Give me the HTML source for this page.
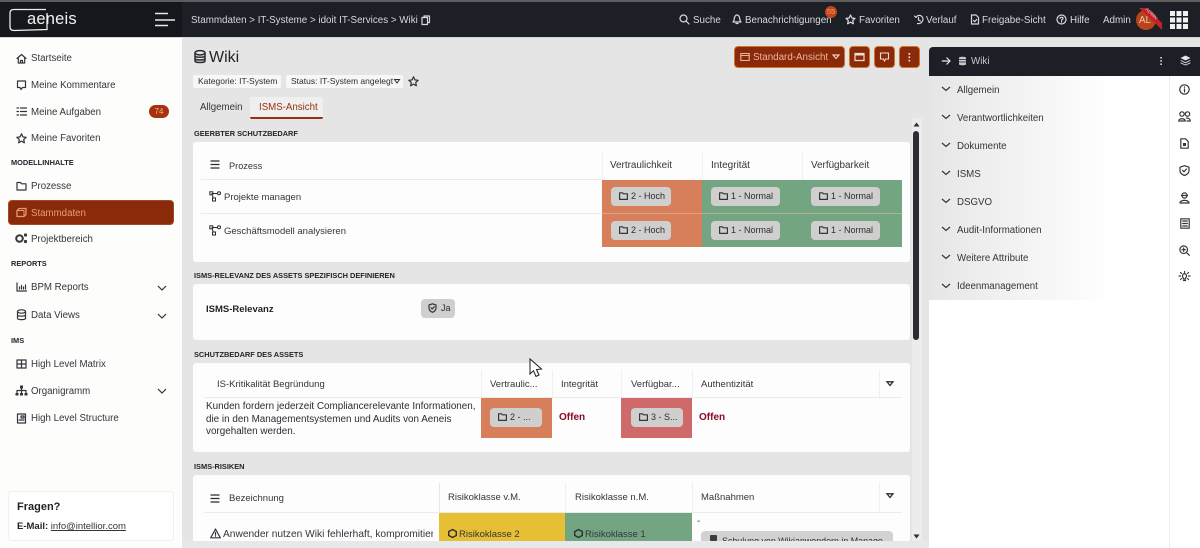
<!DOCTYPE html>
<html lang="de"><head><meta charset="utf-8"><title>Wiki</title>
<style>
*{box-sizing:border-box}
html,body{margin:0;padding:0;width:1200px;height:548px;overflow:hidden;background:#e5e5e5;font-family:"Liberation Sans",sans-serif;color:#2b2d33}
.a{position:absolute}
.t{position:absolute;white-space:nowrap;line-height:14px;font-size:9.7px;margin-top:1px}
.h{color:#d8d9dc;font-size:9.8px}
.s{font-weight:700;font-size:7.4px;color:#22242a}
.n{font-size:9.7px;color:#33353b}
.c{font-size:9.5px;color:#33353b}
.w{background:#fdfdfd}
.line{position:absolute;background:#ebebeb;height:1px}
.sep{position:absolute;width:1px;background:#f0f0f0}
.chip{position:absolute;background:#cfcfce;border-radius:4px;height:19px;color:#2b2d33;font-size:9px;line-height:19px;white-space:nowrap;padding-left:20px}
.chip svg{position:absolute;left:8px;top:5px}
svg{position:absolute;overflow:visible}
.i{fill:none;stroke:#33353b;stroke-width:1.2;stroke-linecap:round;stroke-linejoin:round}
.ih{fill:none;stroke:#d8d9dc;stroke-width:1.2;stroke-linecap:round;stroke-linejoin:round}
.btn{position:absolute;top:46px;height:22px;background:#8a2a0b;border:1px solid #c9772f;border-radius:4px}
.o{font-weight:700;color:#8c0a2a;font-size:10px}
</style></head><body>
<!-- header -->
<div class="a" style="left:0;top:0;width:1200px;height:37px;background:#1c1f26;border-top:2px solid #5b5c5e"></div>
<div class="a" style="left:0;top:0;width:182px;height:37px;background:#15171c;border-top:2px solid #5b5c5e"></div>
<div class="a" style="left:0;top:37px;width:1200px;height:1px;background:#d5d6dc"></div>
<svg style="left:0;top:0" width="182" height="37"><path d="M46 9.500L14 9.500Q10 9.500 10 13L10 27Q10 30.500 14 30.500L47 29.500V13" fill="none" stroke="#eee" stroke-width="1.300"/><path d="M155 13.500H168M155 20H175M155 25.500H168" stroke="#e8e8e8" stroke-width="1.400" fill="none"/></svg>
<div class="t" style="left:27px;top:8px;font-size:16.500px;line-height:20px;color:#f2f2f2;letter-spacing:.2px">aeneis</div>
<div class="t h" style="left:191px;top:13px">Stammdaten &gt; IT-Systeme &gt; idoit IT-Services &gt; Wiki</div>
<svg style="left:421px;top:15px" width="10" height="10"><path class="ih" d="M3 2.500V1H8.500V7.500H7M1 2.500H6.500V9.500H1Z"/></svg>
<svg style="left:679px;top:14px" width="11" height="11"><circle class="ih" cx="4.500" cy="4.500" r="3.500"/><path class="ih" d="M7 7L10 10"/></svg>
<div class="t h" style="left:693px;top:13px">Suche</div>
<svg style="left:732px;top:14px" width="10" height="11"><path class="ih" d="M1 8C2.500 7 2 5 2.500 3.500S4 1 5 1S7 2 7.500 3.500S7.500 7 9 8ZM4 9.500H6"/></svg>
<div class="t h" style="left:745px;top:13px">Benachrichtigungen</div>
<div class="a" style="left:825px;top:6px;width:12px;height:12px;border-radius:50%;background:#c2451a;color:#e9a27f;font-size:7.500px;line-height:12px;text-align:center">55</div>
<svg style="left:845px;top:14px" width="11" height="11"><path class="ih" d="M5.500 1L6.900 4L10 4.400L7.700 6.500L8.400 9.800L5.500 8.100L2.600 9.800L3.300 6.500L1 4.400L4.100 4Z"/></svg>
<div class="t h" style="left:859px;top:13px">Favoriten</div>
<svg style="left:913px;top:14px" width="11" height="11"><path class="ih" d="M1.500 2L3 3.500C4 1.500 6 1 7.500 1.600C9.500 2.500 10.500 4.500 9.700 6.700C9 8.500 7 10 4.500 9.500M5.500 3.500V6L7.500 7"/></svg>
<div class="t h" style="left:926px;top:13px">Verlauf</div>
<svg style="left:970px;top:14px" width="10" height="11"><path class="ih" d="M1.500 1H6L8.500 3.500V10H1.500ZM3.500 6.500L4.700 7.700L6.700 5.500"/></svg>
<div class="t h" style="left:982px;top:13px">Freigabe-Sicht</div>
<svg style="left:1056px;top:14px" width="11" height="11"><circle class="ih" cx="5.500" cy="5.500" r="4.500"/><path class="ih" d="M4 4.300C4.300 3 7 3 7 4.500C7 5.500 5.500 5.500 5.500 6.700M5.500 8V8.200"/></svg>
<div class="t h" style="left:1070px;top:13px">Hilfe</div>
<div class="t h" style="left:1103px;top:13px">Admin</div>
<div class="a" style="left:1136px;top:10px;width:20px;height:20px;border-radius:50%;background:#b9431a"></div>
<div class="t" style="left:1139px;top:13px;font-size:9.800px;color:#e8c8b5">AL</div>
<svg style="left:1136px;top:7px" width="28" height="24"><path d="M3 1H11L26 16L26 23L18 15Z" fill="#c2202a"/></svg>
<div class="t" style="left:1144px;top:9px;font-size:4.500px;color:#f4c9c9;transform:rotate(45deg);line-height:8px">ADMIN</div>
<svg style="left:1170px;top:11px" width="18" height="18"><g fill="#f2f2f2"><rect x="0" y="0" width="5" height="5"/><rect x="6.500" y="0" width="5" height="5"/><rect x="13" y="0" width="5" height="5"/><rect x="0" y="6.500" width="5" height="5"/><rect x="6.500" y="6.500" width="5" height="5"/><rect x="13" y="6.500" width="5" height="5"/><rect x="0" y="13" width="5" height="5"/><rect x="6.500" y="13" width="5" height="5"/><rect x="13" y="13" width="5" height="5"/></g></svg>

<!-- sidebar -->
<div class="a" style="left:0;top:38px;width:182px;height:510px;background:#fdfdfc"></div>
<svg style="left:16px;top:53px" width="11" height="11"><path class="i" d="M1 5.500L5.500 1.500L10 5.500M2.300 4.500V10H8.700V4.500M4.500 10V7.500H6.500V10"/></svg>
<div class="t n" style="left:31px;top:51px">Startseite</div>
<svg style="left:16px;top:80px" width="11" height="11"><path class="i" d="M1.500 1H9.500V7.500H6.500L5 9.500L4 7.500H1.500Z"/></svg>
<div class="t n" style="left:31px;top:78px">Meine Kommentare</div>
<svg style="left:16px;top:106px" width="11" height="11"><path class="i" d="M4.500 2H10.500M4.500 5.500H10.500M4.500 9H10.500M1 2H2.500M1 5.500H2.500M1 9H2.500"/></svg>
<div class="t n" style="left:31px;top:105px">Meine Aufgaben</div>
<div class="a" style="left:149px;top:105px;width:20px;height:13px;border-radius:7px;background:#a8320e;color:#e7b7a0;font-size:8px;line-height:13px;text-align:center">74</div>
<svg style="left:16px;top:133px" width="11" height="11"><path class="i" d="M5.500 .8L6.900 3.900L10.200 4.300L7.700 6.500L8.400 9.800L5.500 8.100L2.600 9.800L3.300 6.500L.8 4.300L4.100 3.900Z"/></svg>
<div class="t n" style="left:31px;top:131px">Meine Favoriten</div>
<div class="t s" style="left:11px;top:155px">MODELLINHALTE</div>
<svg style="left:16px;top:181px" width="11" height="10"><path class="i" d="M1 1.500H4.500L5.500 2.800H10V9H1Z"/></svg>
<div class="t n" style="left:31px;top:179px">Prozesse</div>
<div class="a" style="left:8px;top:200px;width:166px;height:25px;background:#8a2a0b;border-radius:4px;border:1px solid #a24a22"></div>
<svg style="left:16px;top:207px" width="11" height="11"><path d="M1 3.500L3 1.500H10V7.500L8 9.500H1Z" fill="none" stroke="#e59a6c" stroke-width="1.300"/><path d="M1 3.500H8V9.500" fill="none" stroke="#e59a6c" stroke-width="1"/></svg>
<div class="t n" style="left:31px;top:206px;color:#ec9d6d">Stammdaten</div>
<svg style="left:15px;top:233px" width="13" height="11"><circle cx="4.500" cy="5.500" r="3.300" fill="none" stroke="#33353b" stroke-width="2"/><circle cx="10.500" cy="2" r="1.600" fill="#33353b"/><circle cx="10.500" cy="8.500" r="1.600" fill="#33353b"/></svg>
<div class="t n" style="left:31px;top:232px">Projektbereich</div>
<div class="t s" style="left:11px;top:256px">REPORTS</div>
<svg style="left:16px;top:282px" width="11" height="10"><path class="i" d="M1 1V9H10.500M3.500 7V5M5.500 7V3.500M7.500 7V5M9.500 7V3"/></svg>
<div class="t n" style="left:31px;top:280px">BPM Reports</div>
<svg style="left:157px;top:285px" width="10" height="6"><path d="M1 1L5 5L9 1" fill="none" stroke="#33353b" stroke-width="1.200"/></svg>
<svg style="left:16px;top:309px" width="11" height="12"><ellipse class="i" cx="5.500" cy="2.500" rx="4" ry="1.700"/><path class="i" d="M1.500 2.500V9.500C1.500 11 9.500 11 9.500 9.500V2.500M1.500 6C1.500 7.500 9.500 7.500 9.500 6"/></svg>
<div class="t n" style="left:31px;top:308px">Data Views</div>
<svg style="left:157px;top:313px" width="10" height="6"><path d="M1 1L5 5L9 1" fill="none" stroke="#33353b" stroke-width="1.200"/></svg>
<div class="t s" style="left:11px;top:333px">IMS</div>
<svg style="left:16px;top:359px" width="11" height="10"><path class="i" d="M1 1H10V9H1ZM1 5H10M5.500 1V9"/></svg>
<div class="t n" style="left:31px;top:357px">High Level Matrix</div>
<svg style="left:15px;top:385px" width="13" height="11"><path class="i" d="M6.500 3.500V5.500M2 8V5.500H11V8M6.500 5.500V8"/><rect x="5" y=".5" width="3" height="3" fill="#33353b"/><rect x=".5" y="8" width="3" height="2.500" fill="#33353b"/><rect x="5" y="8" width="3" height="2.500" fill="#33353b"/><rect x="9.500" y="8" width="3" height="2.500" fill="#33353b"/></svg>
<div class="t n" style="left:31px;top:384px">Organigramm</div>
<svg style="left:157px;top:388px" width="10" height="6"><path d="M1 1L5 5L9 1" fill="none" stroke="#33353b" stroke-width="1.200"/></svg>
<svg style="left:16px;top:413px" width="11" height="11"><path class="i" d="M1.500 1H9.500V10H1.500ZM5 3H8V5H5ZM3 7H8"/></svg>
<div class="t n" style="left:31px;top:411px">High Level Structure</div>
<div class="a" style="left:8px;top:491px;width:166px;height:50px;background:#fff;border:1px solid #f0f0f0;border-radius:4px"></div>
<div class="t" style="left:17px;top:499px;font-weight:700;font-size:11px;color:#1f2126">Fragen?</div>
<div class="t" style="left:17px;top:519px;font-size:9.500px;color:#1f2126"><b>E-Mail:</b> <span style="text-decoration:underline;color:#33353b">info@intellior.com</span></div>

<!-- title -->
<svg style="left:194px;top:50px" width="12" height="14"><ellipse cx="6" cy="2.800" rx="5" ry="2.200" fill="none" stroke="#2b2d33" stroke-width="1.500"/><path d="M1 2.800V11C1 13 11 13 11 11V2.800M1 5.800C1 7.800 11 7.800 11 5.800M1 8.500C1 10.500 11 10.500 11 8.500" fill="none" stroke="#2b2d33" stroke-width="1.500"/></svg>
<div class="t" style="left:209px;top:47px;font-size:16px;line-height:20px;color:#222429">Wiki</div>
<div class="a" style="left:193px;top:75px;width:88px;height:13px;background:#f7f7f7;border-radius:2px"></div>
<div class="t" style="left:198px;top:73px;font-size:8.500px;color:#2b2d33">Kategorie: IT-System</div>
<div class="a" style="left:286px;top:75px;width:117px;height:13px;background:#f7f7f7;border-radius:2px"></div>
<div class="t" style="left:291px;top:73px;font-size:8.500px;color:#2b2d33">Status: IT-System angelegt</div>
<svg style="left:394px;top:79px" width="6" height="5"><path d="M.5 .5H5.500L3 4Z" fill="none" stroke="#2b2d33"/></svg>
<svg style="left:408px;top:76px" width="11" height="11"><path class="i" d="M5.500 .8L6.900 3.900L10.200 4.300L7.700 6.500L8.400 9.800L5.500 8.100L2.600 9.800L3.300 6.500L.8 4.300L4.100 3.900Z"/></svg>
<div class="t n" style="left:200px;top:100px">Allgemein</div>
<div class="a" style="left:250px;top:97px;width:73px;height:22px;background:#efefef;border-bottom:2px solid #96310e;border-radius:2px"></div>
<div class="t n" style="left:259px;top:100px;color:#96310e">ISMS-Ansicht</div>

<!-- buttons -->
<div class="btn" style="left:734px;width:111px"></div>
<svg style="left:740px;top:52px" width="10" height="10"><path d="M.8 1.500H9.200V8.500H.8ZM.8 3.500H9.200" fill="none" stroke="#e8b79c" stroke-width="1.100"/></svg>
<div class="t" style="left:753px;top:50px;font-size:9.800px;color:#eab597">Standard-Ansicht</div>
<svg style="left:832px;top:54px" width="8" height="6"><path d="M1 1H7L4 4.500Z" fill="none" stroke="#f0d0bc" stroke-width="1.200"/></svg>
<div class="btn" style="left:849px;width:21px"></div>
<svg style="left:854px;top:52px" width="11" height="10"><path d="M1 1.500H10V8.500H1Z" fill="none" stroke="#f3ddd0" stroke-width="1.200"/><path d="M1 1.500H10V3.500H1Z" fill="#f3ddd0"/></svg>
<div class="btn" style="left:874px;width:21px"></div>
<svg style="left:879px;top:52px" width="11" height="11"><path d="M1.500 1H9.500V7H6.500L5.500 9L4.500 7H1.500Z" fill="none" stroke="#f3ddd0" stroke-width="1.100"/></svg>
<div class="btn" style="left:899px;width:21px"></div>
<svg style="left:908px;top:53px" width="3" height="9"><g fill="#f3ddd0"><rect x=".5" y="0" width="1.700" height="1.700"/><rect x=".5" y="3.400" width="1.700" height="1.700"/><rect x=".5" y="6.800" width="1.700" height="1.700"/></g></svg>

<!-- section 1 -->
<div class="t s" style="left:194px;top:126px">GEERBTER SCHUTZBEDARF</div>
<div class="a w" style="left:193px;top:142px;width:717px;height:120px;border-radius:3px"></div>
<svg style="left:210px;top:160px" width="10" height="9"><path d="M.5 1H9.500M.5 4.500H9.500M.5 8H9.500" stroke="#2b2d33" stroke-width="1.200" fill="none"/></svg>
<div class="t c" style="left:229px;top:158px;font-size:9.200px">Prozess</div>
<div class="line" style="left:201px;top:179px;width:401px"></div>
<div class="line" style="left:201px;top:213px;width:401px"></div>
<div class="sep" style="left:602px;top:152px;height:28px"></div>
<div class="sep" style="left:702px;top:152px;height:28px"></div>
<div class="sep" style="left:802px;top:152px;height:28px"></div>
<div class="t c" style="left:610px;top:158px;font-size:9.900px">Vertraulichkeit</div>
<div class="t c" style="left:711px;top:158px;font-size:10px">Integrität</div>
<div class="t c" style="left:811px;top:158px;font-size:9.900px">Verfügbarkeit</div>
<svg style="left:209px;top:191px" width="12" height="11"><path d="M2.500 2.500H9M3 3.500L4.500 7.500" fill="none" stroke="#2b2d33" stroke-width="1"/><rect x=".8" y=".8" width="3" height="3" fill="none" stroke="#2b2d33"/><circle cx="10" cy="2.300" r="1.500" fill="none" stroke="#2b2d33"/><rect x="3.500" y="7" width="3" height="3" fill="none" stroke="#2b2d33"/></svg>
<div class="t c" style="left:224px;top:190px">Projekte managen</div>
<svg style="left:209px;top:225px" width="12" height="11"><path d="M2.500 2.500H9M3 3.500L4.500 7.500" fill="none" stroke="#2b2d33" stroke-width="1"/><rect x=".8" y=".8" width="3" height="3" fill="none" stroke="#2b2d33"/><circle cx="10" cy="2.300" r="1.500" fill="none" stroke="#2b2d33"/><rect x="3.500" y="7" width="3" height="3" fill="none" stroke="#2b2d33"/></svg>
<div class="t c" style="left:224px;top:224px">Geschäftsmodell analysieren</div>
<div class="a" style="left:602px;top:180px;width:100px;height:67px;background:#d77f5a"></div>
<div class="a" style="left:702px;top:180px;width:200px;height:67px;background:#74a582"></div>
<div class="a" style="left:602px;top:213px;width:300px;height:1px;background:#e8b8a0;opacity:.6"></div>
<div class="chip" style="left:611px;top:187px;width:60px"><svg width="9" height="8"><path class="i" d="M.6 .8H3.500L4.300 1.800H8.400V7.400H.6Z"/></svg>2 - Hoch</div>
<div class="chip" style="left:711px;top:187px;width:69px"><svg width="9" height="8"><path class="i" d="M.6 .8H3.500L4.300 1.800H8.400V7.400H.6Z"/></svg>1 - Normal</div>
<div class="chip" style="left:811px;top:187px;width:69px"><svg width="9" height="8"><path class="i" d="M.6 .8H3.500L4.300 1.800H8.400V7.400H.6Z"/></svg>1 - Normal</div>
<div class="chip" style="left:611px;top:221px;width:60px"><svg width="9" height="8"><path class="i" d="M.6 .8H3.500L4.300 1.800H8.400V7.400H.6Z"/></svg>2 - Hoch</div>
<div class="chip" style="left:711px;top:221px;width:69px"><svg width="9" height="8"><path class="i" d="M.6 .8H3.500L4.300 1.800H8.400V7.400H.6Z"/></svg>1 - Normal</div>
<div class="chip" style="left:811px;top:221px;width:69px"><svg width="9" height="8"><path class="i" d="M.6 .8H3.500L4.300 1.800H8.400V7.400H.6Z"/></svg>1 - Normal</div>

<!-- section 2 -->
<div class="t s" style="left:194px;top:268px">ISMS-RELEVANZ DES ASSETS SPEZIFISCH DEFINIEREN</div>
<div class="a w" style="left:193px;top:284px;width:717px;height:56px;border-radius:3px"></div>
<div class="t" style="left:206px;top:302px;font-weight:700;font-size:9.500px;color:#1f2126">ISMS-Relevanz</div>
<div class="chip" style="left:421px;top:299px;width:34px;font-size:9px"><svg width="9" height="10" style="left:7px;top:4px"><path class="i" d="M4.500 .8L8 2V5C8 7 6.500 8.500 4.500 9.300C2.500 8.500 1 7 1 5V2ZM3 4.800L4.200 6L6.200 3.800"/></svg>Ja</div>

<!-- section 3 -->
<div class="t s" style="left:194px;top:347px">SCHUTZBEDARF DES ASSETS</div>
<div class="a w" style="left:193px;top:363px;width:717px;height:89px;border-radius:3px"></div>
<div class="t c" style="left:217px;top:377px">IS-Kritikalität Begründung</div>
<div class="t c" style="left:490px;top:377px">Vertraulic...</div>
<div class="t c" style="left:561px;top:377px">Integrität</div>
<div class="t c" style="left:631px;top:377px">Verfügbar...</div>
<div class="t c" style="left:701px;top:377px">Authentizität</div>
<svg style="left:886px;top:381px" width="8" height="6"><path d="M1 .8H7L4 4.500Z" fill="none" stroke="#2b2d33" stroke-width="1.300"/></svg>
<div class="sep" style="left:481px;top:370px;height:27px"></div>
<div class="sep" style="left:552px;top:370px;height:27px"></div>
<div class="sep" style="left:621px;top:370px;height:27px"></div>
<div class="sep" style="left:692px;top:370px;height:27px"></div>
<div class="sep" style="left:879px;top:370px;height:27px"></div>
<div class="line" style="left:204px;top:397px;width:698px"></div>
<div class="t" style="left:206px;top:399px;font-size:9.900px;line-height:12.500px;color:#2b2d33;margin-top:2px">Kunden fordern jederzeit Compliancerelevante Informationen,<br>die in den Managementsystemen und Audits von Aeneis<br>vorgehalten werden.</div>
<div class="a" style="left:481px;top:398px;width:71px;height:40px;background:#d77f5a"></div>
<div class="chip" style="left:490px;top:408px;width:52px"><svg width="9" height="8"><path class="i" d="M.6 .8H3.500L4.300 1.800H8.400V7.400H.6Z"/></svg>2 - ...</div>
<div class="t o" style="left:559px;top:410px">Offen</div>
<div class="a" style="left:621px;top:398px;width:71px;height:40px;background:#d06a6a"></div>
<div class="chip" style="left:631px;top:408px;width:52px"><svg width="9" height="8"><path class="i" d="M.6 .8H3.500L4.300 1.800H8.400V7.400H.6Z"/></svg>3 - S...</div>
<div class="t o" style="left:699px;top:410px">Offen</div>
<svg style="left:529px;top:358px" width="14" height="20"><path d="M1 1V16L4.500 12.800L7 18.500L10 17L7.500 11.500L12.500 11Z" fill="#fff" stroke="#1a1a1a" stroke-width="1"/></svg>

<!-- section 4 -->
<div class="t s" style="left:194px;top:459px">ISMS-RISIKEN</div>
<div class="a w" style="left:193px;top:475px;width:717px;height:73px;border-radius:3px"></div>
<svg style="left:210px;top:494px" width="10" height="9"><path d="M.5 1H9.500M.5 4.500H9.500M.5 8H9.500" stroke="#2b2d33" stroke-width="1.200" fill="none"/></svg>
<div class="t c" style="left:229px;top:491px">Bezeichnung</div>
<div class="t c" style="left:448px;top:490px">Risikoklasse v.M.</div>
<div class="t c" style="left:575px;top:490px">Risikoklasse n.M.</div>
<div class="t c" style="left:701px;top:490px">Maßnahmen</div>
<svg style="left:886px;top:493px" width="8" height="6"><path d="M1 .8H7L4 4.500Z" fill="none" stroke="#2b2d33" stroke-width="1.300"/></svg>
<div class="sep" style="left:439px;top:483px;height:30px;background:#e6e6e6"></div>
<div class="sep" style="left:565px;top:483px;height:30px"></div>
<div class="sep" style="left:692px;top:483px;height:30px"></div>
<div class="sep" style="left:879px;top:483px;height:30px"></div>
<div class="line" style="left:204px;top:512px;width:698px"></div>
<svg style="left:210px;top:528px" width="11" height="11"><path class="i" d="M5.500 1L10.300 9.800H.7ZM5.500 4.300V6.800M5.500 8V8.200"/></svg>
<div class="a" style="left:222px;top:527px;width:211px;height:14px;overflow:hidden"><div class="t c" style="left:1px;top:0;font-size:10.200px">Anwender nutzen Wiki fehlerhaft, kompromitieren</div></div>
<div class="a" style="left:439px;top:513px;width:126px;height:28px;background:#e6bf35"></div>
<div class="a" style="left:565px;top:513px;width:127px;height:28px;background:#74a582"></div>
<svg style="left:448px;top:529px" width="9" height="9"><path d="M4.500 .5L8.300 2.500V6.500L4.500 8.500L.7 6.500V2.500Z" fill="none" stroke="#2b2d33" stroke-width="1.400"/></svg>
<div class="t c" style="left:459px;top:527px">Risikoklasse 2</div>
<svg style="left:574px;top:529px" width="9" height="9"><path d="M4.500 .5L8.300 2.500V6.500L4.500 8.500L.7 6.500V2.500Z" fill="none" stroke="#2b2d33" stroke-width="1.400"/></svg>
<div class="t c" style="left:585px;top:527px">Risikoklasse 1</div>
<div class="t n" style="left:697px;top:514px">-</div>
<div class="a" style="left:701px;top:531px;width:192px;height:10px;background:#d2d2d2;border-radius:4px 4px 0 0;overflow:hidden"><div class="t" style="left:21px;top:2px;font-size:8.900px;color:#2b2d33">Schulung von Wikianwendern in Manage</div><div class="a" style="left:9px;top:4px;width:7px;height:6px;background:#3a3c42;border-radius:1px"></div></div>
<div class="a" style="left:182px;top:541px;width:747px;height:7px;background:#e8e8ea"></div>

<!-- scrollbar -->
<div class="a" style="left:912px;top:118px;width:10px;height:423px;background:#ececec"></div>
<svg style="left:913px;top:122px" width="7" height="5"><path d="M3.500 .5L6.500 4.500H.5Z" fill="#2b2d33"/></svg>
<div class="a" style="left:913px;top:131px;width:6px;height:209px;background:#2b2d33;border-radius:3px"></div>
<svg style="left:913px;top:534px" width="7" height="5"><path d="M.5 .5H6.500L3.500 4.500Z" fill="#2b2d33"/></svg>

<!-- right panel -->
<div class="a" style="left:929px;top:76px;width:271px;height:472px;background:#fff"></div>
<div class="a" style="left:929px;top:76px;width:240px;height:224px;background:linear-gradient(90deg,#e6e6e6 0,#f0f0f0 70px,#f9f9f9 140px,#fff 180px)"></div>
<div class="a" style="left:929px;top:47px;width:271px;height:29px;background:#1c1f26;border-radius:4px 0 0 0"></div>
<svg style="left:941px;top:56px" width="10" height="10"><path d="M.8 5H9M5.500 1.500L9 5L5.500 8.500" fill="none" stroke="#e6e6e6" stroke-width="1.200"/></svg>
<svg style="left:958px;top:56px" width="9" height="10"><path d="M1 1.800C1 .4 8 .4 8 1.800V8.200C8 9.600 1 9.600 1 8.200Z" fill="#c9cacc"/><path d="M1 3.500H8M1 6H8" stroke="#1c1f26" stroke-width=".7"/></svg>
<div class="t" style="left:971px;top:54px;font-size:9.800px;color:#c9cacc">Wiki</div>
<svg style="left:1160px;top:57px" width="3" height="9"><g fill="#d8d9dc"><rect x=".3" y="0" width="1.600" height="1.600"/><rect x=".3" y="3.200" width="1.600" height="1.600"/><rect x=".3" y="6.400" width="1.600" height="1.600"/></g></svg>
<svg style="left:1180px;top:55px" width="11" height="11"><g fill="#e6e6e6"><path d="M5.500 .5L10.500 3L5.500 5.500L.5 3Z"/><path d="M.8 5L5.500 7.300L10.200 5L10.500 5.800L5.500 8.200L.5 5.800Z"/><path d="M.8 7.400L5.500 9.600L10.200 7.400L10.500 8.200L5.500 10.500L.5 8.200Z"/></g></svg>
<div class="a" style="left:1169px;top:76px;width:1px;height:472px;background:#ececec"></div>

<svg style="left:941px;top:86px" width="10" height="6"><path d="M1 1L5 4.500L9 1" fill="none" stroke="#33353b" stroke-width="1.200"/></svg>
<div class="t n" style="left:957px;top:83px">Allgemein</div>
<svg style="left:941px;top:114px" width="10" height="6"><path d="M1 1L5 4.500L9 1" fill="none" stroke="#33353b" stroke-width="1.200"/></svg>
<div class="t n" style="left:957px;top:111px">Verantwortlichkeiten</div>
<svg style="left:941px;top:142px" width="10" height="6"><path d="M1 1L5 4.500L9 1" fill="none" stroke="#33353b" stroke-width="1.200"/></svg>
<div class="t n" style="left:957px;top:139px">Dokumente</div>
<svg style="left:941px;top:170px" width="10" height="6"><path d="M1 1L5 4.500L9 1" fill="none" stroke="#33353b" stroke-width="1.200"/></svg>
<div class="t n" style="left:957px;top:167px">ISMS</div>
<svg style="left:941px;top:198px" width="10" height="6"><path d="M1 1L5 4.500L9 1" fill="none" stroke="#33353b" stroke-width="1.200"/></svg>
<div class="t n" style="left:957px;top:195px">DSGVO</div>
<svg style="left:941px;top:226px" width="10" height="6"><path d="M1 1L5 4.500L9 1" fill="none" stroke="#33353b" stroke-width="1.200"/></svg>
<div class="t n" style="left:957px;top:223px">Audit-Informationen</div>
<svg style="left:941px;top:254px" width="10" height="6"><path d="M1 1L5 4.500L9 1" fill="none" stroke="#33353b" stroke-width="1.200"/></svg>
<div class="t n" style="left:957px;top:251px">Weitere Attribute</div>
<svg style="left:941px;top:283px" width="10" height="6"><path d="M1 1L5 4.500L9 1" fill="none" stroke="#33353b" stroke-width="1.200"/></svg>
<div class="t n" style="left:957px;top:279px">Ideenmanagement</div>

<svg style="left:1179px;top:84px" width="11" height="11"><circle class="i" cx="5.500" cy="5.500" r="4.700"/><path class="i" d="M5.500 5V8M5.500 3V3.200"/></svg>
<svg style="left:1178px;top:111px" width="13" height="11"><circle class="i" cx="4" cy="3" r="2.200"/><circle class="i" cx="9.500" cy="3" r="2.200"/><path class="i" d="M.7 10C.7 7 7.300 7 7.300 10ZM8.500 7C10.500 6.800 12.300 8 12.300 10H9"/></svg>
<svg style="left:1180px;top:138px" width="9" height="11"><path class="i" d="M.8 .8H5.500L8.200 3.500V10.200H.8Z"/><rect x="3" y="5" width="3" height="3" fill="#33353b"/></svg>
<svg style="left:1179px;top:165px" width="11" height="11"><path class="i" d="M5.500 .7L10 2.200V5.500C10 8 8 9.600 5.500 10.500C3 9.600 1 8 1 5.500V2.200ZM3.500 5.300L5 6.800L7.500 4"/></svg>
<svg style="left:1179px;top:192px" width="11" height="12"><circle class="i" cx="5.500" cy="3.500" r="2.600"/><path class="i" d="M1 11C1 7.500 10 7.500 10 11ZM2.500 3.500H8.500"/></svg>
<svg style="left:1180px;top:218px" width="10" height="11"><path class="i" d="M.8 .8H9.200V10.200H.8ZM2.700 3H7.300M2.700 5.500H7.300M2.700 8H7.300"/></svg>
<svg style="left:1179px;top:245px" width="11" height="11"><circle class="i" cx="4.700" cy="4.700" r="3.800"/><path class="i" d="M7.500 7.500L10.300 10.300M3 4.700H6.400M4.700 3V6.400"/></svg>
<svg style="left:1178px;top:271px" width="13" height="12"><path class="i" d="M4.500 5C4.500 2 8.500 2 8.500 5C8.500 6.300 7.500 6.800 7.500 8H5.500C5.500 6.800 4.500 6.300 4.500 5ZM5.500 9.500H7.500M6.500 .5V1.500M1 5H2.500M10.500 5H12M2.500 1.500L3.500 2.500M10.500 1.500L9.500 2.500M2.500 8.500L3.500 7.500M10.500 8.500L9.500 7.500"/></svg>
</body></html>
